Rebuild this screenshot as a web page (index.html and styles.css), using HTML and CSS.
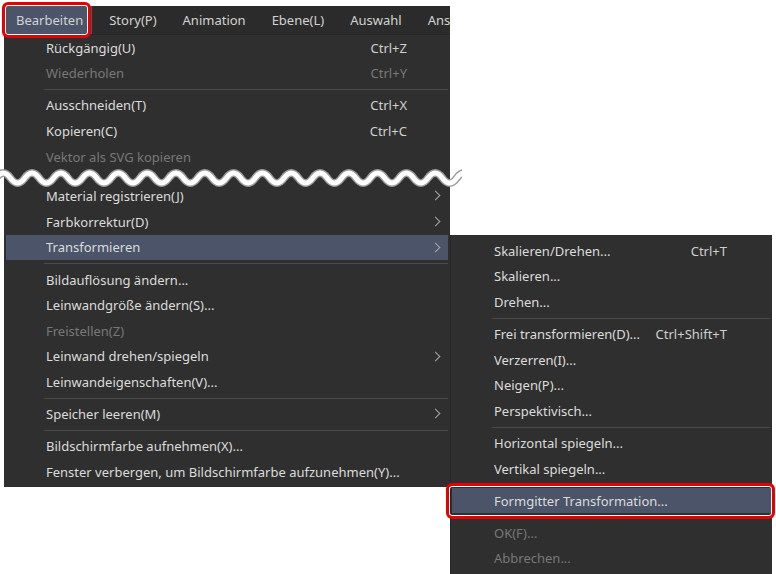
FILE: index.html
```html
<!DOCTYPE html>
<html lang="de">
<head>
    <meta charset="UTF-8">
    <title>Bearbeiten - Transformieren</title>
    <link rel="stylesheet" href="styles.css">
</head>
<body>
    <div class="screen">
        <div class="app">
            <div class="menubar">
                <span class="menubar-item active">Bearbeiten</span>
                <span class="menubar-item">Story(P)</span>
                <span class="menubar-item">Animation</span>
                <span class="menubar-item">Ebene(L)</span>
                <span class="menubar-item">Auswahl</span>
                <span class="menubar-item">Ansicht</span>
            </div>
            <ul class="menu main-menu">
                <li class="item"><span class="label">Rückgängig(U)</span><span class="shortcut">Ctrl+Z</span></li>
                <li class="item disabled"><span class="label">Wiederholen</span><span class="shortcut">Ctrl+Y</span></li>
                <li class="sep"></li>
                <li class="item"><span class="label">Ausschneiden(T)</span><span class="shortcut">Ctrl+X</span></li>
                <li class="item"><span class="label">Kopieren(C)</span><span class="shortcut">Ctrl+C</span></li>
                <li class="item disabled"><span class="label">Vektor als SVG kopieren</span></li>
                <li class="gap"></li>
                <li class="item sub"><span class="label">Material registrieren(J)</span></li>
                <li class="item sub"><span class="label">Farbkorrektur(D)</span></li>
                <li class="item sub selected"><span class="label">Transformieren</span></li>
                <li class="sep"></li>
                <li class="item"><span class="label">Bildauflösung ändern...</span></li>
                <li class="item"><span class="label">Leinwandgröße ändern(S)...</span></li>
                <li class="item disabled"><span class="label">Freistellen(Z)</span></li>
                <li class="item sub"><span class="label">Leinwand drehen/spiegeln</span></li>
                <li class="item"><span class="label">Leinwandeigenschaften(V)...</span></li>
                <li class="sep"></li>
                <li class="item sub"><span class="label">Speicher leeren(M)</span></li>
                <li class="sep"></li>
                <li class="item"><span class="label">Bildschirmfarbe aufnehmen(X)...</span></li>
                <li class="item"><span class="label">Fenster verbergen, um Bildschirmfarbe aufzunehmen(Y)...</span></li>
            </ul>
        </div>

        <!-- submenu of Transformieren -->
        <ul class="menu sub-menu">
            <li class="item"><span class="label">Skalieren/Drehen...</span><span class="shortcut">Ctrl+T</span></li>
            <li class="item"><span class="label">Skalieren...</span></li>
            <li class="item"><span class="label">Drehen...</span></li>
            <li class="sep"></li>
            <li class="item"><span class="label">Frei transformieren(D)...</span><span class="shortcut">Ctrl+Shift+T</span></li>
            <li class="item"><span class="label">Verzerren(I)...</span></li>
            <li class="item"><span class="label">Neigen(P)...</span></li>
            <li class="item"><span class="label">Perspektivisch...</span></li>
            <li class="sep"></li>
            <li class="item"><span class="label">Horizontal spiegeln...</span></li>
            <li class="item"><span class="label">Vertikal spiegeln...</span></li>
            <li class="sep"></li>
            <li class="item selected"><span class="label">Formgitter Transformation...</span></li>
            <li class="sep"></li>
            <li class="item disabled"><span class="label">OK(F)...</span></li>
            <li class="item disabled"><span class="label">Abbrechen...</span></li>
        </ul>

        <!-- break mark over the shortened menu -->
        <svg class="break" width="462" height="22" viewBox="0 0 462 22">
            <path class="break-edge" d="M-4,11 q7.2,-10 14.4,0 t14.4,0 t14.4,0 t14.4,0 t14.4,0 t14.4,0 t14.4,0 t14.4,0 t14.4,0 t14.4,0 t14.4,0 t14.4,0 t14.4,0 t14.4,0 t14.4,0 t14.4,0 t14.4,0 t14.4,0 t14.4,0 t14.4,0 t14.4,0 t14.4,0 t14.4,0 t14.4,0 t14.4,0 t14.4,0 t14.4,0 t14.4,0 t14.4,0 t14.4,0 t14.4,0 t14.4,0 t14.4,0"/>
            <path class="break-fill" d="M-4,11 q7.2,-10 14.4,0 t14.4,0 t14.4,0 t14.4,0 t14.4,0 t14.4,0 t14.4,0 t14.4,0 t14.4,0 t14.4,0 t14.4,0 t14.4,0 t14.4,0 t14.4,0 t14.4,0 t14.4,0 t14.4,0 t14.4,0 t14.4,0 t14.4,0 t14.4,0 t14.4,0 t14.4,0 t14.4,0 t14.4,0 t14.4,0 t14.4,0 t14.4,0 t14.4,0 t14.4,0 t14.4,0 t14.4,0 t14.4,0"/>
        </svg>

        <div class="callout callout-bar"></div>
        <div class="callout callout-item"></div>
    </div>
</body>
</html>
```

FILE: styles.css
```css
body {
    margin: 0;
    background: #fff;
    font-family: "Noto Sans", "Segoe UI", sans-serif;
    font-size: 13px;
    color: #dcdcdc;
}
.screen {
    position: relative;
    width: 776px;
    height: 574px;
    overflow: hidden;
}
.app {
    margin: 6px 0 0 4px;
    width: 446px;
    background: #2f2f2f;
}
.menubar {
    display: flex;
    gap: 7px;
    height: 29px;
    padding-left: 2px;
    background: #2b2b2b;
    border-bottom: 1px solid #262626;
    overflow: hidden;
    white-space: nowrap;
    box-sizing: border-box;
}
.menubar-item {
    display: flex;
    align-items: center;
    height: 28px;
    padding: 0 9px 0 10px;
    color: #d2d2d2;
    font-size: 13px;
}
.menubar-item.active {
    background: #4b5468;
}
.menu {
    list-style: none;
    margin: 0;
    padding: 0;
    background: #2f2f2f;
}
.main-menu {
    padding-bottom: 2.5px;
}
.item {
    display: flex;
    align-items: center;
    height: 25.6px;
    margin: 0 2px;
    padding-left: 40px;
    padding-right: 41px;
    white-space: nowrap;
    position: relative;
}
.item .label {
    flex: 1;
}
.item .shortcut {
    color: #d0d0d0;
}
.item.disabled,
.item.disabled .shortcut {
    color: #787878;
}
.item.selected {
    background: #4b5468;
}
.item.sub::after {
    content: "";
    position: absolute;
    right: 9px;
    top: 9px;
    width: 6px;
    height: 6px;
    border-right: 1.3px solid #a8a8a8;
    border-top: 1.3px solid #a8a8a8;
    transform: rotate(45deg);
}
.sep {
    height: 1px;
    margin: 3px 2px 2.5px 40px;
    background: #4a4a4a;
}
.gap {
    height: 14px;
}
.sub-menu {
    position: absolute;
    left: 450px;
    top: 235px;
    width: 322px;
    padding-top: 3px;
    padding-bottom: 20px;
    border-left: 1px solid #262626;
    box-sizing: border-box;
}
.sub-menu .item {
    margin: 0 1px;
    padding-left: 42px;
    padding-right: 44px;
}
.sub-menu .sep {
    margin-left: 41px;
}
.break {
    position: absolute;
    left: 0;
    top: 167px;
}
.break-edge {
    fill: none;
    stroke: #9a9a9a;
    stroke-width: 8;
}
.break-fill {
    fill: none;
    stroke: #fff;
    stroke-width: 5;
}
.callout {
    position: absolute;
    border: 3px solid #e60000;
    border-radius: 6px;
    box-shadow: inset 0 0 0 1px #fff;
    box-sizing: border-box;
}
.callout-bar {
    left: 2px;
    top: 2px;
    width: 89px;
    height: 36px;
}
.callout-item {
    left: 446px;
    top: 483px;
    width: 329px;
    height: 36px;
}
```
